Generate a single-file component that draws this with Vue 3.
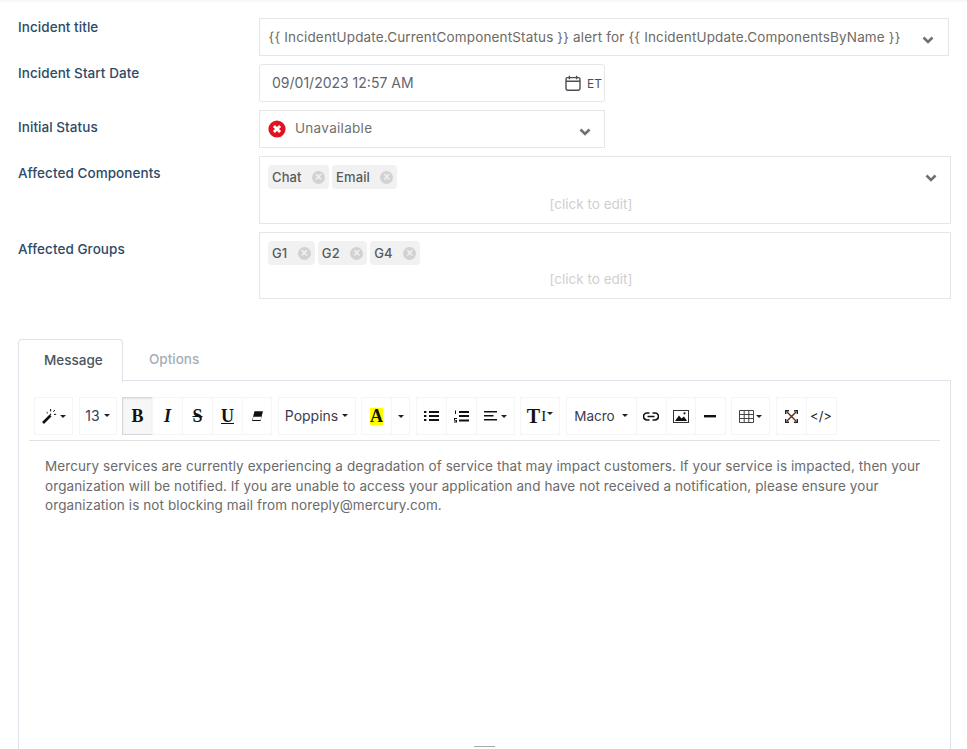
<script setup>
const title = '{' + '{ IncidentUpdate.CurrentComponentStatus }' + '} alert for {' + '{ IncidentUpdate.ComponentsByName }' + '}'
const rows = {
  components: ['Chat', 'Email'],
  groups: ['G1', 'G2', 'G4'],
}
</script>

<template>
  <div class="page">
    <div class="strip"></div>
    <div class="form">
      <div class="row">
        <div class="label">Incident title</div>
        <div class="box title-box">
          <span class="title-text" v-text="title"></span>
          <svg class="chev" viewBox="0 0 12 8"><path d="M1.5 1.5 6 6l4.5-4.5" fill="none" stroke="#6f6f6f" stroke-width="2.6"/></svg>
        </div>
      </div>
      <div class="row">
        <div class="label">Incident Start Date</div>
        <div class="box date-box">
          <span class="date-text">09/01/2023 12:57 AM</span>
          <svg class="cal" viewBox="0 0 16 16" fill="none" stroke="#4a4f55" stroke-width="1.4">
            <rect x="1" y="2.6" width="14" height="12.6" rx="1.6"/>
            <path d="M1 6.2h14M4.4 .8v3.4M11.6 .8v3.4"/>
          </svg>
          <span class="et">ET</span>
        </div>
      </div>
      <div class="row">
        <div class="label pad">Initial Status</div>
        <div class="box status-box">
          <svg class="err" viewBox="0 0 18 18">
            <circle cx="9" cy="9" r="8.6" fill="#e0131f"/>
            <path d="M5.9 5.9l6.2 6.2M12.1 5.9l-6.2 6.2" stroke="#fff" stroke-width="2.8"/>
          </svg>
          <span class="status-text">Unavailable</span>
          <svg class="chev status-chev" viewBox="0 0 12 8"><path d="M1.5 1.5 6 6l4.5-4.5" fill="none" stroke="#6f6f6f" stroke-width="2.6"/></svg>
        </div>
      </div>
      <div class="row">
        <div class="label pad">Affected Components</div>
        <div class="box multi comp">
          <div class="tags">
            <span v-for="t in rows.components" :key="t" class="tag">{{ t }}<i class="x">×</i></span>
          </div>
          <div class="edit">[click to edit]</div>
          <svg class="chev abs" viewBox="0 0 12 8"><path d="M1.5 1.5 6 6l4.5-4.5" fill="none" stroke="#6f6f6f" stroke-width="2.6"/></svg>
        </div>
      </div>
      <div class="row">
        <div class="label pad">Affected Groups</div>
        <div class="box multi groups-box">
          <div class="tags">
            <span v-for="t in rows.groups" :key="t" class="tag">{{ t }}<i class="x">×</i></span>
          </div>
          <div class="edit">[click to edit]</div>
        </div>
      </div>
    </div>

    <div class="tabs">
      <div class="tab active">Message</div>
      <div class="tab">Options</div>
    </div>
    <div class="panel">
      <div class="toolbar">
        <div class="grp"><button class="b w39">
          <svg width="16" height="16" viewBox="0 0 16 16"><path d="M1 15 8.5 7.5" stroke="#111" stroke-width="2.6"/><path d="M8.6 1v2.4M8.6 5.6v1.6M4.6 4.2l1.4 1.2M11.2 3.6 13 2.2M12 6.4h2.2" stroke="#111" stroke-width="1"/></svg><i class="caret near"></i>
        </button></div>
        <div class="grp"><button class="b w38 txt num">13<i class="caret"></i></button></div>
        <div class="grp">
          <button class="b w30 on ser"><b>B</b></button>
          <button class="b w30 ser"><b><em>I</em></b></button>
          <button class="b w30 ser strike"><b>S</b></button>
          <button class="b w30 ser under"><b>U</b></button>
          <button class="b w29">
            <svg width="13" height="12" viewBox="0 0 12 11"><path d="M3.200 1H11L8.800 10H1z" fill="#111"/><path d="M2.200 6.200h7.400L8.800 9.200H1.600z" fill="#fff"/></svg>
          </button>
        </div>
        <div class="grp"><button class="b w78 txt num">Poppins<i class="caret"></i></button></div>
        <div class="grp">
          <button class="b w30 ser"><span class="hl">A</span></button>
          <button class="b w19"><i class="caret none"></i></button>
        </div>
        <div class="grp">
          <button class="b w30">
            <svg width="15" height="12" viewBox="0 0 15 12" fill="#111"><path d="M5 1h10v2H5zM5 5h10v2H5zM5 9h10v2H5zM0 1h2.400v2H0zM0 5h2.400v2H0zM0 9h2.400v2H0z"/></svg>
          </button>
          <button class="b w30">
            <svg width="15" height="13" viewBox="0 0 15 13" fill="#111"><path d="M5 1h10v2H5zM5 5h10v2H5zM5 9.500h10v2H5zM1 .5h1v3.500H1zM0 8h3v1H1v1h2v2.500H0v-1h2v-.7H0z"/></svg>
          </button>
          <button class="b w39">
            <svg width="13" height="10" viewBox="0 0 13 10" fill="#111"><path d="M0 0h13v1.600H0zM0 4h9.500v1.600H0zM0 8h13v1.600H0z"/></svg><i class="caret"></i>
          </button>
        </div>
        <div class="grp"><button class="b w40 ser tsize"><b>T</b><span class="ibar">I</span><i class="caret tight"></i></button></div>
        <div class="grp">
          <button class="b w71 txt macro">Macro<i class="caret wide"></i></button>
          <button class="b w30">
            <svg width="16" height="9" viewBox="0 0 16 9" fill="none" stroke="#111" stroke-width="1.700"><path d="M6.500 1H4a3.500 3.500 0 0 0 0 7h2.500M9.500 1H12a3.500 3.500 0 0 1 0 7H9.500M4.500 4.500h7"/></svg>
          </button>
          <button class="b w29">
            <svg width="16" height="13" viewBox="0 0 16 13"><rect x=".5" y=".5" width="15" height="12" fill="none" stroke="#333"/><path d="M2 11 6 5.500 8.500 8.500 11 6.500 14 11z" fill="#111"/><circle cx="11.500" cy="3.300" r="1.100" fill="#111"/></svg>
          </button>
          <button class="b w30">
            <svg width="12" height="3" viewBox="0 0 12 3"><rect width="12" height="2.400" fill="#111"/></svg>
          </button>
        </div>
        <div class="grp"><button class="b w39">
          <svg width="15" height="13" viewBox="0 0 15 13" fill="none" stroke="#444" stroke-width="1"><path d="M.5.500h14v12H.500zM.5 4.500h14M.5 8.500h14M5.200 .5v12M9.800.5v12"/></svg><i class="caret near"></i>
        </button></div>
        <div class="grp">
          <button class="b w30">
            <svg width="13" height="13" viewBox="0 0 13 13" fill="none" stroke="#5a2a10" stroke-width="1.400"><path d="M2 2l9 9M11 2l-9 9"/><path d="M.7 4V.7H4M9 .7h3.300V4M12.300 9v3.300H9M4 12.300H.7V9" stroke="#222"/></svg>
          </button>
          <button class="b w30 code">&lt;/&gt;</button>
        </div>
      </div>
      <div class="editable">Mercury services are currently experiencing a degradation of service that may impact customers. If your service is impacted, then your organization will be notified. If you are unable to access your application and have not received a notification, please ensure your organization is not blocking mail from noreply@mercury.com.</div>
      <div class="resizer"></div>
    </div>
  </div>
</template>

<style>
html, body { margin: 0; background: #fff; overflow: hidden; }
</style>

<style scoped>
.page {
  height: 749px;
  overflow: hidden;
  background: #fff;
  font-family: "Inter", "Liberation Sans", sans-serif;
  color: #555;
}
.strip { height: 2px; background: #f8f8f8; }
.form { padding: 16px 16px 0 18px; }
.row { display: flex; margin-bottom: 8px; }
.label {
  width: 241px;
  flex: none;
  font-size: 13.500px;
  letter-spacing: .06px;
  line-height: 18px;
  font-weight: 500;
  color: #2e4a66;
}
.label.pad { padding-top: 8px; }
.box {
  position: relative;
  box-sizing: border-box;
  border: 1px solid #e4e7ea;
  display: flex;
  align-items: center;
}
.title-box { width: 690px; height: 38px; padding-left: 8.500px; }
.title-text { font-size: 13.500px; letter-spacing: .15px; color: #6e6a64; white-space: nowrap; margin-top: -1px; }
.chev { width: 12px; height: 8px; position: absolute; right: 14px; top: 17px; }
.status-chev { right: 13px; }
.date-box { width: 346px; height: 38px; border-radius: 3px; padding-left: 12px; }
.date-text { font-size: 14px; color: #5f6670; margin-top: -1px; }
.cal { width: 16px; height: 16px; margin-left: auto; }
.et { font-size: 12px; color: #4a4f55; margin: 0 2px 0 6px; width: 15px; }
.status-box { width: 346px; height: 38px; padding-left: 8px; }
.err { width: 18px; height: 18px; margin-top: -1px; }
.status-text { font-size: 13.500px; letter-spacing: .3px; color: #707070; margin: -2px 0 0 9px; }
.multi { display: block; width: 692px; padding: 8px 8px 0; }
.comp { height: 68px; }
.groups-box { height: 67px; }
.groups-box .edit { margin-top: 4px; }
.chev.abs { top: 17px; right: 13px; }
.tags { display: flex; gap: 3px; }
.tag {
  display: flex;
  align-items: center;
  justify-content: space-between;
  height: 24px;
  padding: 0 4px;
  gap: 10.500px;
  background: #f1f1f1;
  border-radius: 4px;
  font-size: 13px;
  letter-spacing: .1px;
  font-weight: 500;
  color: #5a5a5a;
}
.x {
  width: 13px;
  height: 13px;
  border-radius: 50%;
  background: #d2d2d2;
  color: #f1f1f1;
  font: 700 12px/13px "Liberation Sans", sans-serif;
  text-align: center;
}
.edit {
  font-size: 13.500px;
  line-height: 20px;
  color: #cfcfcf;
  text-align: center;
  margin-top: 5px;
  padding-right: 28px;
}
.tabs { display: flex; margin: 40px 0 0 18px; position: relative; height: 41px; }
.tab {
  box-sizing: border-box;
  font-size: 13.500px;
  font-weight: 500;
  color: #a6adb8;
  padding: 12px 26px 0;
  height: 41px;
}
.tab.active {
  width: 105px;
  height: 43px;
  padding-left: 25px;
  color: #4a5560;
  border: 1px solid #dfe2e8;
  border-bottom: 0;
  border-radius: 4px 4px 0 0;
  background: #fff;
  position: relative;
  z-index: 1;
}
.panel {
  margin-left: 18px;
  width: 933px;
  box-sizing: border-box;
  border: 1px solid #dfe2e8;
  padding: 0 10px;
}
.toolbar {
  display: flex;
  gap: 5.500px;
  padding: 16px 0 5px 5px;
  border-bottom: 1px solid #e2e2e2;
}
.grp { display: flex; }
.b {
  box-sizing: border-box;
  height: 38px;
  padding: 0;
  margin: 0;
  border: 1px solid #f5f5f5;
  margin-left: -1px;
  background: #fff;
  display: flex;
  align-items: center;
  justify-content: center;
  color: #222;
  font-family: inherit;
  font-size: 13px;
}
.grp .b:first-child { margin-left: 0; }
.w19 { width: 19px; } .w29 { width: 30px; } .w30 { width: 31px; }
.w38 { width: 38px; } .w39 { width: 39px; } .w40 { width: 40px; }
.w71 { width: 71px; } .w78 { width: 78px; }
.b.on { background: #f7f7f7; border-color: #d4d7de; box-shadow: inset 0 1px 2px rgba(0,0,0,.08); }
.txt { color: #3b3b52; padding-bottom: 1px; }
.num { font-size: 14px; }
.macro { font-size: 13.500px; }
.ser { font-family: "Liberation Serif", serif; font-size: 18px; color: #111; }
.strike b { text-decoration: line-through; text-decoration-thickness: 1px; }
.under b { text-decoration: underline; text-decoration-thickness: 1px; }
.hl { background: #ffff00; color: #111; font-weight: 700; width: 13px; height: 17px; line-height: 17px; display: block; }
.caret {
  width: 0;
  height: 0;
  border: 3px solid transparent;
  border-top: 3.500px solid #222;
  border-bottom: 0;
  margin-left: 4px;
}
.caret.near { margin-left: 2px; }
.caret.none { margin-left: 0; }
.caret.wide { margin-left: 7px; }
.caret.tight { margin-left: 1px; margin-bottom: 5px; }
.tsize b { font-size: 20px; }
.ibar { font-size: 15px; font-weight: 400; margin-left: 1px; }
.code { font-size: 13px; color: #222; }
.editable {
  height: 289px;
  padding: 16px 16px 0 16px;
  font-size: 13.500px;
  letter-spacing: .09px;
  line-height: 19.500px;
  color: #6b6b6b;
}
.resizer {
  width: 21px;
  height: 3px;
  margin: 0 auto;
  border-top: 1px solid #a9a9a9;
  border-bottom: 1px solid #a9a9a9;
}
</style>
